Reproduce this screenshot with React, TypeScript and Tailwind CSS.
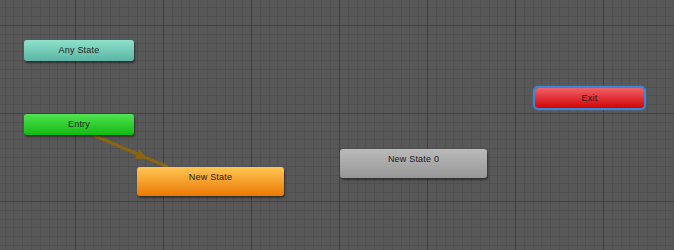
import * as React from "react";

type StateNode = {
  label: string;
  x: number;
  y: number;
  w: number;
  h: number;
  fill: string;
  selected?: boolean;
};

const nodes: StateNode[] = [
  { label: "Any State", x: 24, y: 40, w: 110, h: 21, fill: "bg-[linear-gradient(to_bottom,#8ee2cc,#5cb5a4)]" },
  { label: "Entry", x: 24, y: 114, w: 110, h: 21, fill: "bg-[linear-gradient(to_bottom,#52e352,#12b912)]" },
  { label: "New State", x: 137, y: 167, w: 147, h: 29, fill: "bg-[linear-gradient(to_bottom,#ffc653,#ea7904)]" },
  { label: "New State 0", x: 340, y: 149, w: 147, h: 29, fill: "bg-[linear-gradient(to_bottom,#bababa,#979797)]" },
  { label: "Exit", x: 535, y: 88, w: 109, h: 20, fill: "bg-[linear-gradient(to_bottom,#f06068,#d20404)]", selected: true },
];

// minor grid offsets inside one 88px major cell
const minor = [9, 18, 26, 35, 44, 53, 62, 70, 79];

function GridAndLinks() {
  return (
    <svg className="absolute inset-0" width={674} height={250}>
      <defs>
        <pattern id="grid" x={75} y={25} width={88} height={88} patternUnits="userSpaceOnUse">
          <rect width={88} height={88} fill="#585858" />
          {minor.map((m) => (
            <React.Fragment key={m}>
              <rect x={m} y={0} width={1} height={88} fill="#505050" />
              <rect x={0} y={m} width={88} height={1} fill="#505050" />
            </React.Fragment>
          ))}
          <rect x={0} y={0} width={1} height={88} fill="#3f3f3f" />
          <rect x={0} y={0} width={88} height={1} fill="#3f3f3f" />
        </pattern>
      </defs>
      <rect width={674} height={250} fill="url(#grid)" />
      {/* Entry -> New State transition */}
      <line x1={93} y1={135} x2={168} y2={167} stroke="#8a6512" strokeWidth={3} />
      <polygon points="147,158.5 135,159 139,149" fill="#8a6512" />
    </svg>
  );
}

function Node({ n }: { n: StateNode }) {
  return (
    <div
      className={`absolute rounded-[3px] ${n.fill} ${
        n.selected
          ? "outline-2 outline-[#3d86d6] shadow-[0_0_3px_2px_rgba(61,134,214,0.45)]"
          : "shadow-[1px_2px_2px_rgba(0,0,0,0.45)]"
      } flex justify-center pt-[4px] text-[9px] leading-[12px] text-[#1c1c1c] font-['Liberation_Sans',Arial,sans-serif] tracking-[0.2px]`}
      style={{ left: n.x, top: n.y, width: n.w, height: n.h }}
    >
      {n.label}
    </div>
  );
}

export default function App() {
  return (
    <div className="relative w-[674px] h-[250px] overflow-hidden bg-[#585858]">
      <GridAndLinks />
      {nodes.map((n) => (
        <Node key={n.label} n={n} />
      ))}
    </div>
  );
}
